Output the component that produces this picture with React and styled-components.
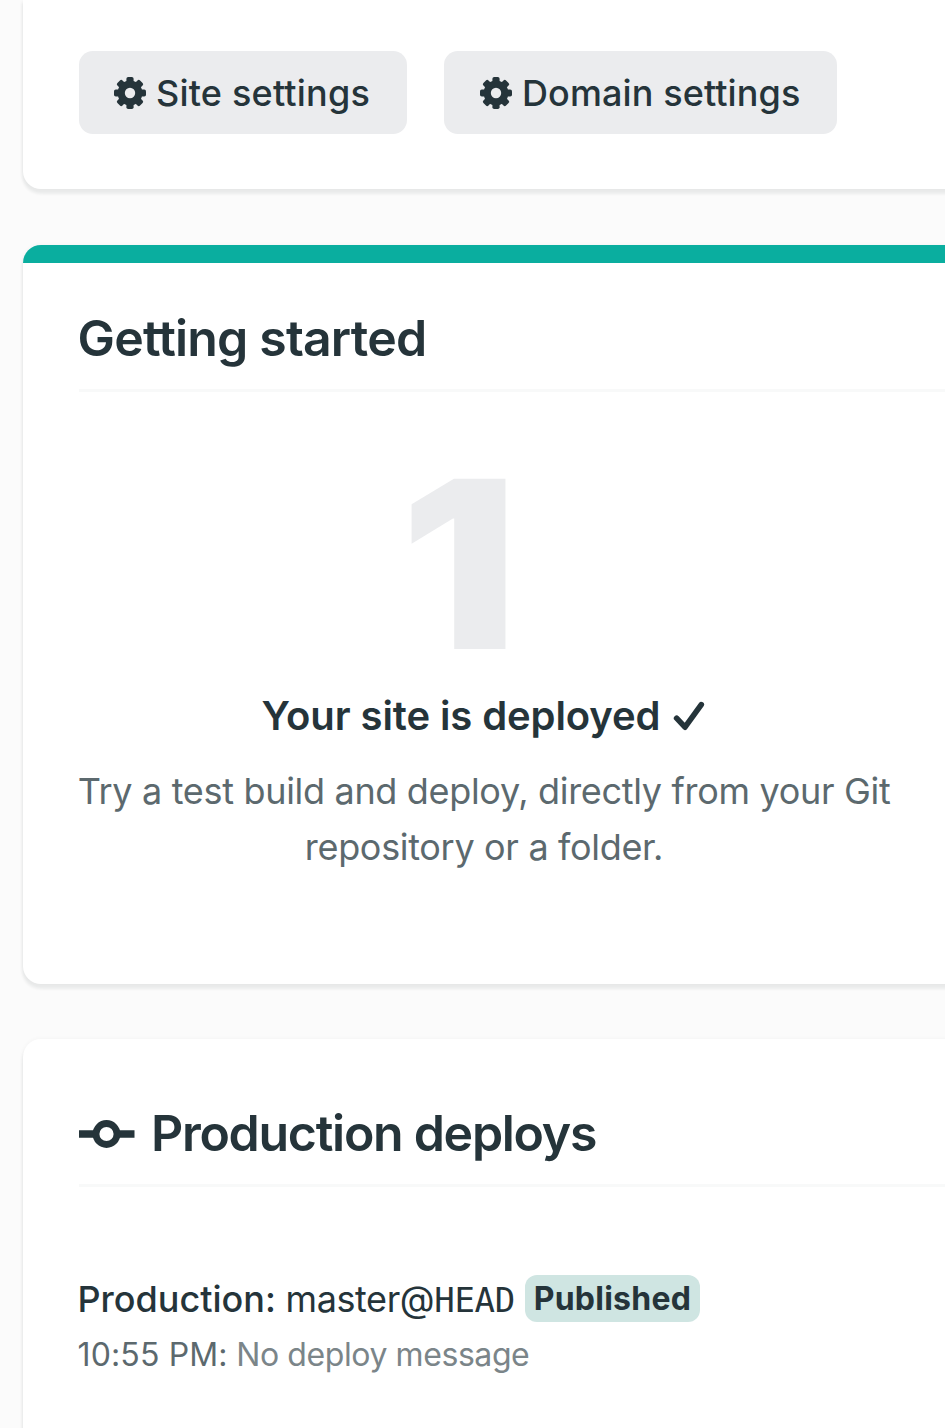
import React from "react";
import styled, { createGlobalStyle } from "styled-components";

const ink = "#25343a";
const muted = "#5c696e";

const GlobalStyle = createGlobalStyle`
  *, *::before, *::after { box-sizing: border-box; }
  html, body { margin: 0; padding: 0; }
  body {
    background: #fbfbfb;
    color: ${ink};
    font-family: Inter, "Liberation Sans", sans-serif;
    overflow: hidden;
  }
  h2, h3, p { margin: 0; }
`;

const Page = styled.main`
  width: 945px;
  height: 1428px;
  overflow: hidden;
  padding-left: 23px;
  display: flex;
  flex-direction: column;
`;

const Card = styled.section`
  flex: none;
  width: 1000px;
  height: ${(p) => p.$height}px;
  margin-bottom: ${(p) => p.$gap || 0}px;
  padding: ${(p) => p.$top}px 56px 0 55.5px;
  background: #fff;
  border-top: ${(p) => (p.$accent ? "18.5px solid #0aae9f" : "0")};
  border-radius: ${(p) => (p.$cut ? "0 0 18px 18px" : "18px")};
  box-shadow: 0 4px 3px 1px rgba(14, 30, 37, 0.065), 0 0 5px rgba(14, 30, 37, 0.04);
`;

const ButtonRow = styled.div`
  display: flex;
  gap: 37px;
`;

const Button = styled.button`
  display: flex;
  align-items: center;
  gap: 9.5px;
  width: ${(p) => p.$width}px;
  height: 83px;
  padding: 1px 0 0 ${(p) => p.$left}px;
  border: 0;
  border-radius: 14px;
  background: #ebecee;
  color: ${ink};
  font: 500 36px/50px Inter, "Liberation Sans", sans-serif;
  letter-spacing: ${(p) => p.$track}px;
  white-space: nowrap;
`;

const Heading = styled.h2`
  display: flex;
  align-items: center;
  gap: 17.5px;
  height: ${(p) => p.$height}px;
  padding-bottom: ${(p) => p.$below}px;
  border-bottom: 3px solid #f8f9f9;
  font-size: 50px;
  line-height: 60px;
  font-weight: 600;
  letter-spacing: ${(p) => p.$track}px;
  text-indent: -1px;
  white-space: nowrap;
`;

const Step = styled.div`
  width: 811px;
  padding-top: 55px;
  display: flex;
  flex-direction: column;
  align-items: center;
  text-align: center;
`;

const StepNumber = styled.div`
  height: 243px;
  margin-right: 50px;
  font-size: 234px;
  line-height: 234px;
  font-weight: 900;
  color: #ebecee;
  transform: scaleX(1.11);
`;

const StepTitle = styled.h3`
  display: flex;
  align-items: center;
  gap: 13px;
  height: 52px;
  margin-right: 1px;
  font-size: 40px;
  line-height: 52px;
  font-weight: 600;
  letter-spacing: -0.1px;
  white-space: nowrap;
`;

const StepText = styled.p`
  margin-top: 21px;
  font-size: 36px;
  line-height: 56px;
  letter-spacing: -0.32px;
  color: ${muted};
  white-space: nowrap;
`;

const DeployLine = styled.div`
  display: flex;
  align-items: center;
  margin-top: 88px;
  height: 47px;
  font-size: 36px;
  line-height: 50px;
  white-space: pre;
`;

const Context = styled.span`
  margin-left: -1px;
  font-weight: 500;
  letter-spacing: 0;
`;

const Branch = styled.span`
  letter-spacing: -0.4px;
`;

const Commit = styled.span`
  padding-top: 3px;
  font-family: "DejaVu Sans Mono", monospace;
  font-size: 34px;
  line-height: 51px;
  letter-spacing: -0.3px;
`;

const Badge = styled.span`
  width: 175px;
  height: 47px;
  margin-left: 10px;
  border-radius: 12px;
  background: #cfe5e2;
  text-align: center;
  font-size: 32px;
  line-height: 48px;
  font-weight: 700;
  letter-spacing: 0.25px;
`;

const DeployMessage = styled.p`
  margin-top: 13px;
  font-size: 32px;
  line-height: 40px;
  letter-spacing: -0.42px;
  text-indent: -1px;
  color: #7b8589;
  white-space: nowrap;
`;

const Time = styled.span`
  letter-spacing: 0.15px;
  color: ${muted};
`;

const Icon = styled.svg`
  flex: none;
  display: block;
`;

const GearIcon = () => (
  <Icon width="33" height="33" viewBox="-16 -16 33 33" fill={ink}>
    {[0, 45, 90, 135].map((a) => (
      <rect key={a} x="-3.6" y="-16" width="7.2" height="32" rx="1.8" transform={`rotate(${a})`} />
    ))}
    <circle r="12.4" />
    <circle r="5.2" fill="#ebecee" />
  </Icon>
);

const CheckIcon = () => (
  <Icon width="32" height="32" viewBox="0 0 32 32" fill="none" stroke={ink} strokeWidth="5.6" strokeLinecap="round" strokeLinejoin="round">
    <path d="M3.6 18.2 L12 27.2 L28.3 4.6" />
  </Icon>
);

const CommitIcon = () => (
  <Icon width="56" height="30" viewBox="0 -1 56 30" stroke={ink} strokeWidth="7.4" fill="none">
    <path d="M0 15H17M39 15H55.5" />
    <circle cx="27.5" cy="15" r="10.5" strokeWidth="6.8" />
  </Icon>
);

export default function App() {
  return (
    <>
      <GlobalStyle />
      <Page>
        <Card $cut $height={189} $top={51} $gap={56}>
          <ButtonRow>
            <Button $width={328} $left={35} $track={0.2}><GearIcon />Site settings</Button>
            <Button $width={393} $left={36} $track={0.1}><GearIcon />Domain settings</Button>
          </ButtonRow>
        </Card>
        <Card $accent $height={739} $top={45} $gap={55}>
          <Heading $height={83.5} $below={20.5} $track={-0.82}>Getting started</Heading>
          <Step>
            <StepNumber>1</StepNumber>
            <StepTitle>Your site is deployed<CheckIcon /></StepTitle>
            <StepText>
              Try a test build and deploy, directly from your Git
              <br />
              repository or a folder.
            </StepText>
          </Step>
        </Card>
        <Card $height={500} $top={64}>
          <Heading $height={84} $below={21} $track={-1.28}><CommitIcon />Production deploys</Heading>
          <DeployLine>
            <Context>Production: </Context>
            <Branch>master@</Branch>
            <Commit>HEAD</Commit>
            <Badge>Published</Badge>
          </DeployLine>
          <DeployMessage><Time>10:55 PM:</Time> No deploy message</DeployMessage>
        </Card>
      </Page>
    </>
  );
}
